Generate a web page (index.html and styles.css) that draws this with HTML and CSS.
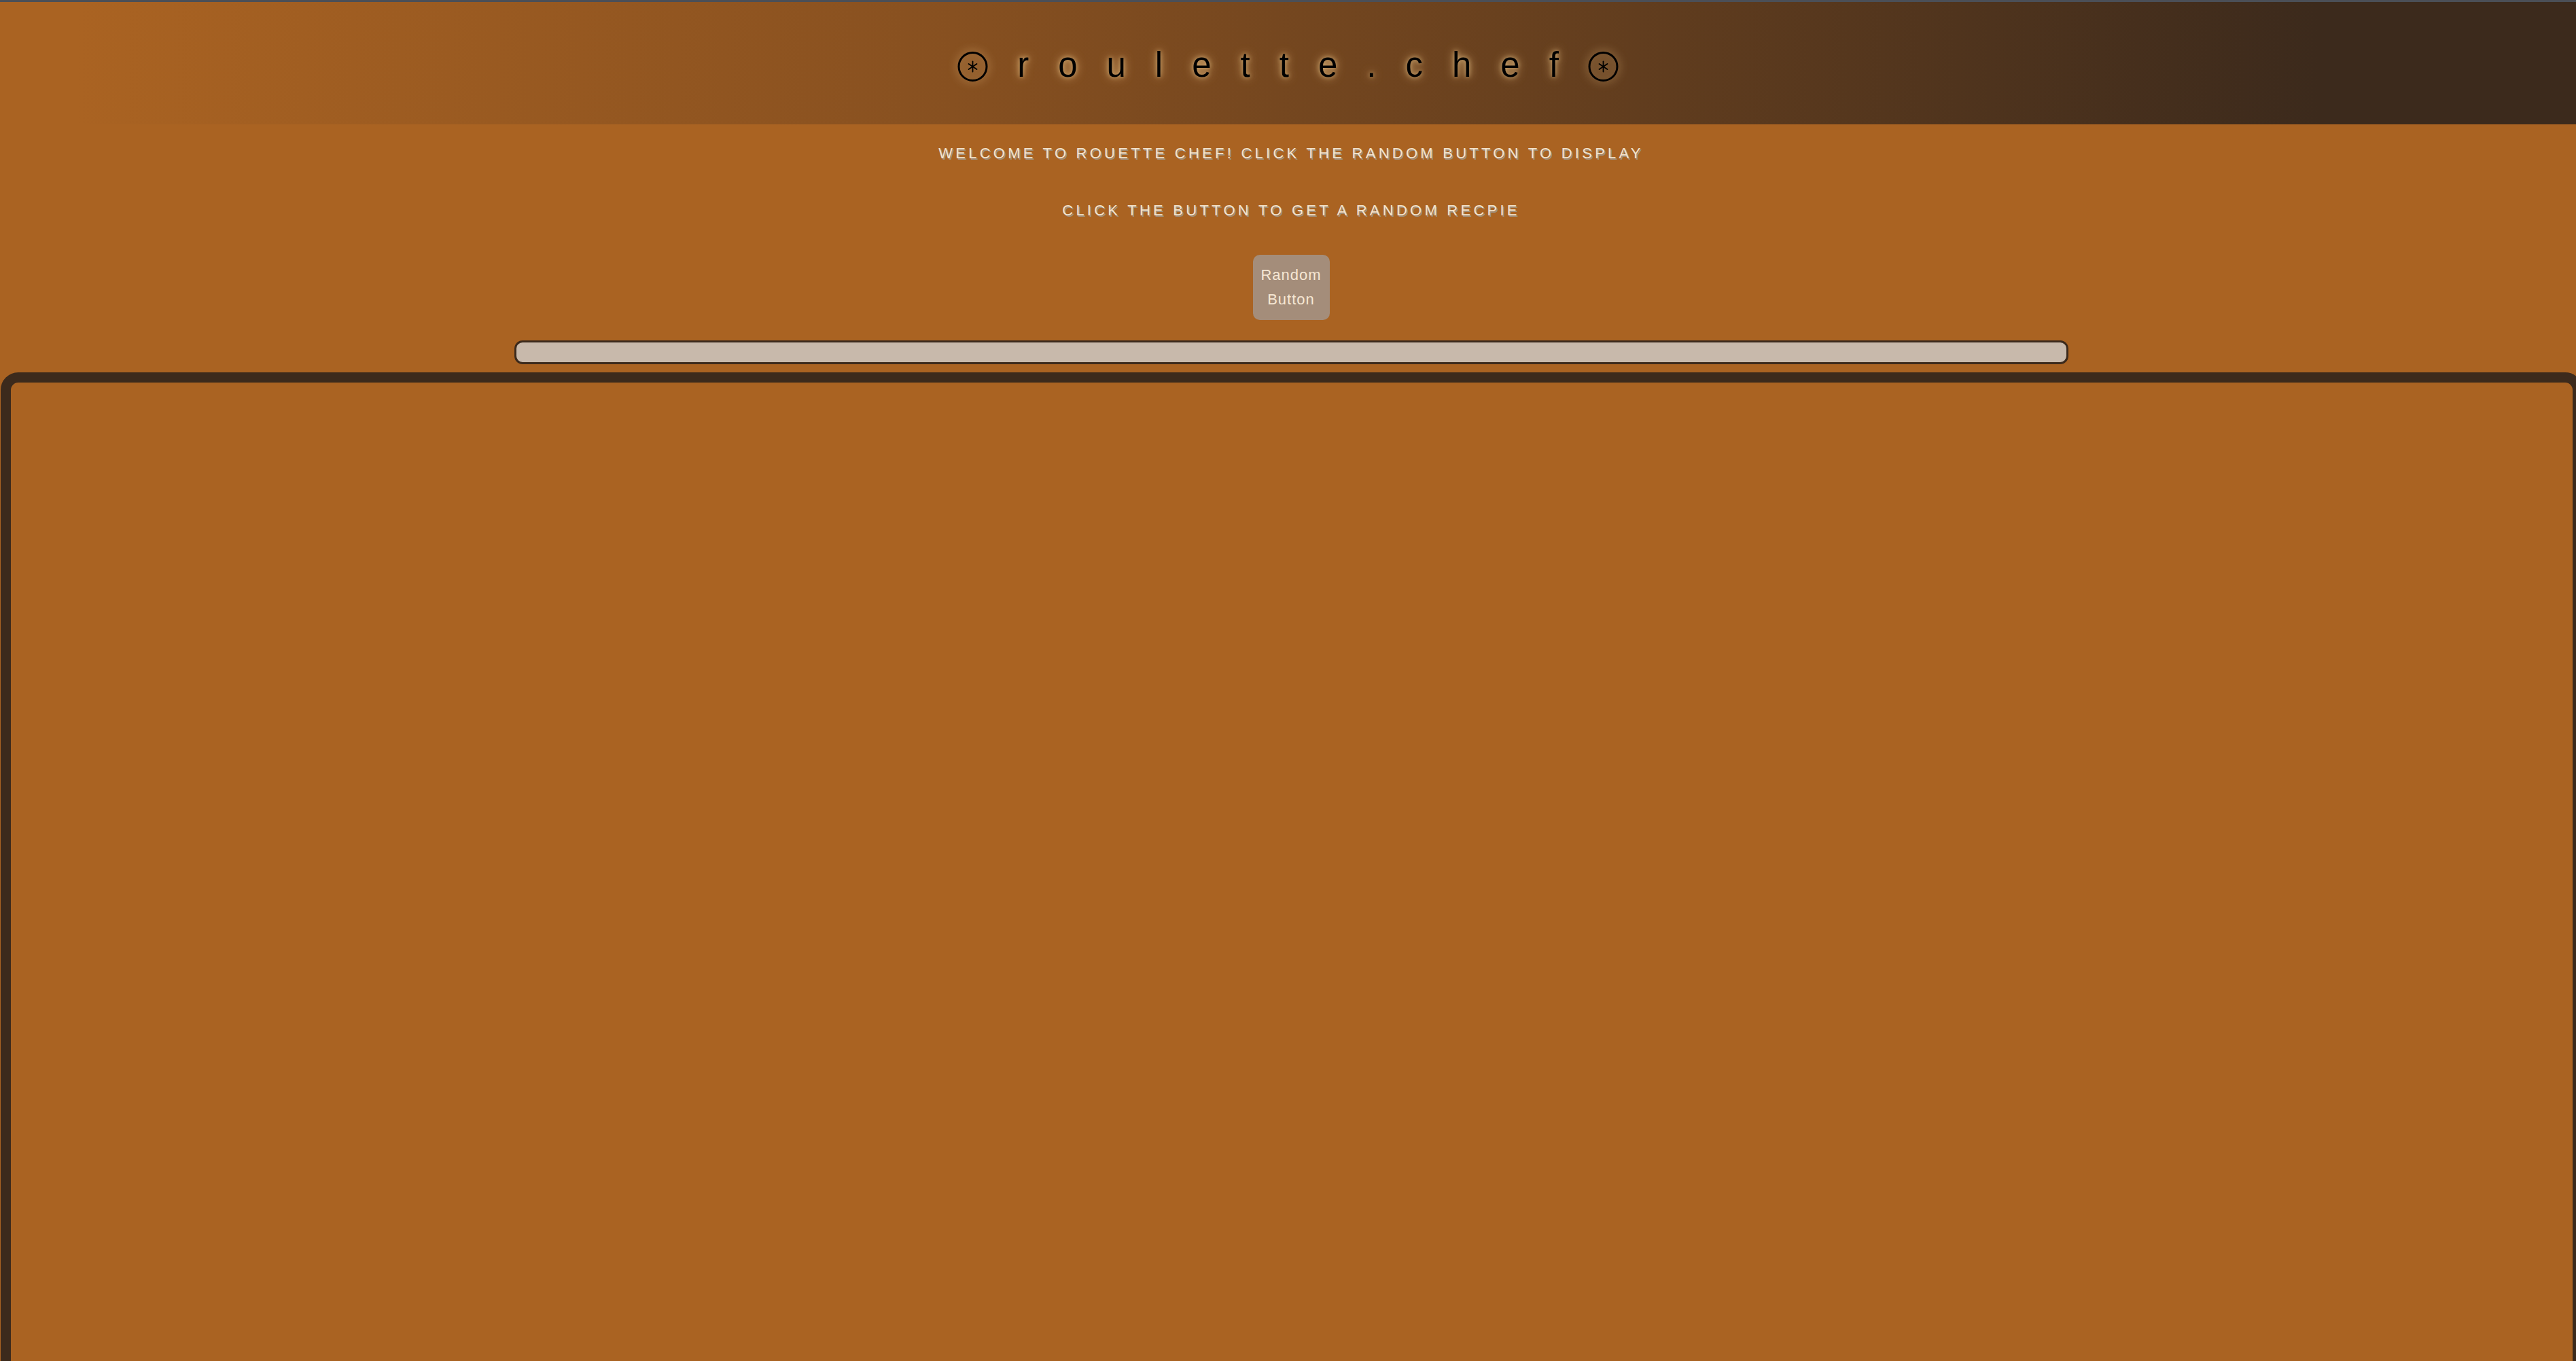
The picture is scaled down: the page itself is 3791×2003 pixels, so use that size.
FILE: index.html
```html
<!DOCTYPE html>
<html lang="en">
<head>
<meta charset="utf-8">
<title>roulette.chef</title>
<link rel="stylesheet" href="styles.css">
</head>
<body>
<header class="site-header">
  <h1 class="brand"><svg class="sym sym-left" viewBox="0 0 45 44" width="45" height="44" role="img" aria-label="⊛"><ellipse cx="22.5" cy="22" rx="20.5" ry="20.5" fill="none" stroke="#000" stroke-width="3"/><g stroke="#000" stroke-width="1.8" stroke-linecap="round"><line x1="22.5" y1="14.5" x2="22.5" y2="29.5"/><line x1="16.5" y1="18" x2="28.5" y2="26"/><line x1="16.5" y1="26" x2="28.5" y2="18"/></g></svg>roulette.chef<svg class="sym" viewBox="0 0 45 44" width="45" height="44" role="img" aria-label="⊛"><ellipse cx="22.5" cy="22" rx="20.5" ry="20.5" fill="none" stroke="#000" stroke-width="3"/><g stroke="#000" stroke-width="1.8" stroke-linecap="round"><line x1="22.5" y1="14.5" x2="22.5" y2="29.5"/><line x1="16.5" y1="18" x2="28.5" y2="26"/><line x1="16.5" y1="26" x2="28.5" y2="18"/></g></svg></h1>
</header>
<section class="intro">
  <p class="intro-line">WELCOME TO ROUETTE CHEF! CLICK THE RANDOM BUTTON TO DISPLAY</p>
  <p class="intro-line second">CLICK THE BUTTON TO GET A RANDOM RECPIE</p>
  <button class="random-btn" type="button">Random Button</button>
  <div class="search-bar"></div>
</section>
<div class="recipe-box"></div>
</body>
</html>
```

FILE: styles.css
```css
html, body {
  margin: 0;
  padding: 0;
  overflow: hidden;
}
body {
  background: #aa6322;
  font-family: "Liberation Sans", Arial, sans-serif;
  border-top: 3px solid #4b4f57;
}
.site-header {
  height: 174px;
  padding-top: 6px;
  background: linear-gradient(to right, #aa6322 3%, #875020 37%, #3c2a1c 90%);
  text-align: center;
}
.brand {
  margin: 0;
  font-weight: normal;
  font-size: 51px;
  line-height: 174px;
  letter-spacing: 43px;
  color: #000;
  text-shadow: 0 0 14px rgba(245, 205, 140, 0.85), 0 0 6px rgba(245, 210, 150, 0.6);
}
.sym {
  vertical-align: -7px;
  filter: drop-shadow(0 0 7px rgba(245, 205, 140, 0.8));
}
.sym-left {
  margin-right: 43px;
}
.intro {
  display: flex;
  flex-direction: column;
  align-items: center;
  padding-top: 30px;
  padding-left: 9px;
}
.intro-line {
  margin: 0;
  font-size: 22px;
  line-height: 26px;
  letter-spacing: 4.25px;
  color: #f4e4cd;
  text-shadow: 2px 2px 0 #a08f7d;
}
.intro-line.second {
  margin-top: 58px;
}
.random-btn {
  margin-top: 52px;
  width: 113px;
  height: 96px;
  box-sizing: border-box;
  padding: 12px 6px;
  border: none;
  border-radius: 10px;
  background: #a48d7a;
  color: #f6e7d4;
  font-family: "Liberation Sans", Arial, sans-serif;
  font-size: 22px;
  line-height: 36px;
  letter-spacing: 1px;
}
.search-bar {
  margin-top: 30px;
  width: 2287px;
  height: 35px;
  box-sizing: border-box;
  border: 3px solid #3c2a1c;
  border-radius: 12px;
  background: #c8b9ab;
}
.recipe-box {
  margin-top: 12px;
  margin-left: 1px;
  width: 3800px;
  height: 1500px;
  box-sizing: border-box;
  border: 15px solid #3c2a1c;
  border-radius: 26px;
  background: #aa6322;
}
```
